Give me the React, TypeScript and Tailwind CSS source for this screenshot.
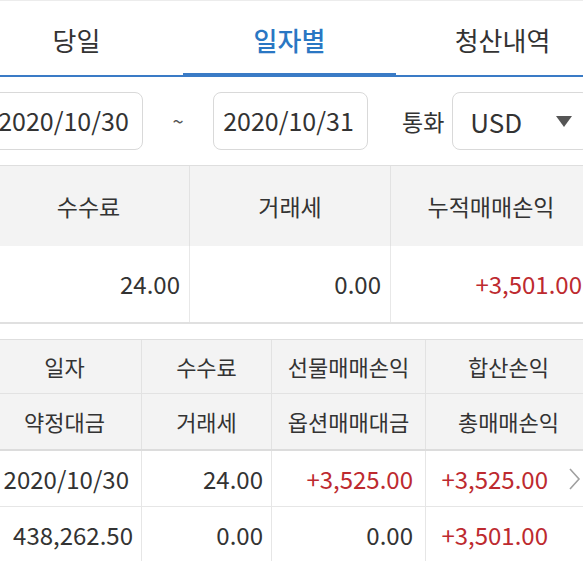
import { useState } from 'react';

const tabs = ['당일', '일자별', '청산내역'];

const colW = ['w-[153px]', 'w-[130px]', 'w-[154px]', 'w-[166px]'];

function Chevron() {
  return (
    <svg width="13" height="24" viewBox="0 0 13 24" className="absolute right-[10px] top-1/2 -translate-y-1/2">
      <polyline points="2,2 11,12 2,22" fill="none" stroke="#a0a0a0" strokeWidth="1.6" />
    </svg>
  );
}

export default function App() {
  const [active, setActive] = useState(1);

  return (
    <div
      className="w-[583px] h-[561px] overflow-hidden bg-white text-[#333]"
      style={{ fontFamily: '"Noto Sans CJK KR", "Noto Sans", sans-serif' }}
    >
      <div className="w-[639px] -ml-[30px]">
        {/* Tabs */}
        <div className="relative flex h-[77px] border-t border-[#ececec] border-b-2 border-b-[#3a7bc6]">
          {tabs.map((t, i) => (
            <button
              key={t}
              onClick={() => setActive(i)}
              className={`relative flex-1 flex items-center justify-center pt-[3px] text-[26px] ${
                active === i ? 'text-[#2a77c3] font-medium' : 'text-[#333]'
              }`}
            >
              {t}
              {active === i && (
                <span className="absolute left-0 right-0 bottom-[-2px] h-[4px] bg-[#3a7bc6]" />
              )}
            </button>
          ))}
        </div>

        {/* Filter */}
        <div className="flex items-center h-[88px] pl-[18px] whitespace-nowrap">
          <div className="shrink-0 w-[155px] h-[58px] rounded-[8px] border border-[#d9d9d9] flex items-center justify-center text-[25px] pr-[4px]">
            2020/10/30
          </div>
          <div className="shrink-0 w-[70px] text-center text-[20px] text-[#555]">~</div>
          <div className="shrink-0 w-[155px] h-[58px] rounded-[8px] border border-[#d9d9d9] flex items-center justify-center text-[25px] pr-[4px]">
            2020/10/31
          </div>
          <div className="shrink-0 ml-[34px] text-[23px]">통화</div>
          <div className="shrink-0 ml-[8px] w-[138px] h-[58px] rounded-[8px] border border-[#d9d9d9] flex items-center justify-between pl-[17px] pr-[17px] text-[26px]">
            <span>USD</span>
            <svg width="16" height="11" viewBox="0 0 16 11">
              <polygon points="0,0 16,0 8,11" fill="#555" />
            </svg>
          </div>
        </div>

        {/* Summary */}
        <div className="border-t border-[#dedede]">
          <div className="mx-[18px]">
            <div className="flex h-[80px] bg-[#f3f3f3] text-[23px]">
              {['수수료', '거래세', '누적매매손익'].map((h, i) => (
                <div
                  key={h}
                  className={`w-[201px] flex items-center justify-center ${i > 0 ? 'border-l border-[#e2e2e2]' : ''}`}
                >
                  {h}
                </div>
              ))}
            </div>
            <div className="flex h-[78px] text-[24px] border-b-2 border-[#e0e0e0]">
              {[
                ['24.00', ''],
                ['0.00', ''],
                ['+3,501.00', 'text-[#bd2a2f]'],
              ].map(([v, c], i) => (
                <div
                  key={i}
                  className={`w-[201px] flex items-center justify-end pr-[9px] ${c} ${i > 0 ? 'border-l border-[#e8e8e8]' : ''}`}
                >
                  {v}
                </div>
              ))}
            </div>
          </div>
        </div>

        {/* Daily table */}
        <div className="mx-[18px] mt-[15px] border-t border-[#dedede] text-[22px]">
          <div className="flex h-[54px] bg-[#f3f3f3] border-b border-[#e2e2e2]">
            {['일자', '수수료', '선물매매손익', '합산손익'].map((h, i) => (
              <div
                key={h}
                className={`${colW[i]} flex items-center justify-center ${i > 0 ? 'border-l border-[#e2e2e2]' : ''}`}
              >
                {h}
              </div>
            ))}
          </div>
          <div className="flex h-[57px] bg-[#f3f3f3] border-b-2 border-[#dcdcdc]">
            {['약정대금', '거래세', '옵션매매대금', '총매매손익'].map((h, i) => (
              <div
                key={h}
                className={`${colW[i]} flex items-center justify-center ${i > 0 ? 'border-l border-[#e2e2e2]' : ''}`}
              >
                {h}
              </div>
            ))}
          </div>
          <div className="relative flex h-[56px] border-b border-[#e6e6e6] text-[24px]">
            <div className={`${colW[0]} flex items-center justify-end pr-[12px]`}>2020/10/30</div>
            <div className={`${colW[1]} flex items-center justify-end pr-[8px] border-l border-[#e6e6e6]`}>24.00</div>
            <div className={`${colW[2]} flex items-center justify-end pr-[12px] border-l border-[#e6e6e6] text-[#bd2a2f]`}>
              +3,525.00
            </div>
            <div className={`${colW[3]} relative flex items-center justify-end pr-[43px] border-l border-[#e6e6e6] text-[#bd2a2f]`}>
              +3,525.00
              <Chevron />
            </div>
          </div>
          <div className="flex h-[56px] border-b border-[#e6e6e6] text-[24px]">
            <div className={`${colW[0]} flex items-center justify-end pr-[8px]`}>438,262.50</div>
            <div className={`${colW[1]} flex items-center justify-end pr-[8px] border-l border-[#e6e6e6]`}>0.00</div>
            <div className={`${colW[2]} flex items-center justify-end pr-[12px] border-l border-[#e6e6e6]`}>0.00</div>
            <div className={`${colW[3]} flex items-center justify-end pr-[43px] border-l border-[#e6e6e6] text-[#bd2a2f]`}>
              +3,501.00
            </div>
          </div>
        </div>
      </div>
    </div>
  );
}
